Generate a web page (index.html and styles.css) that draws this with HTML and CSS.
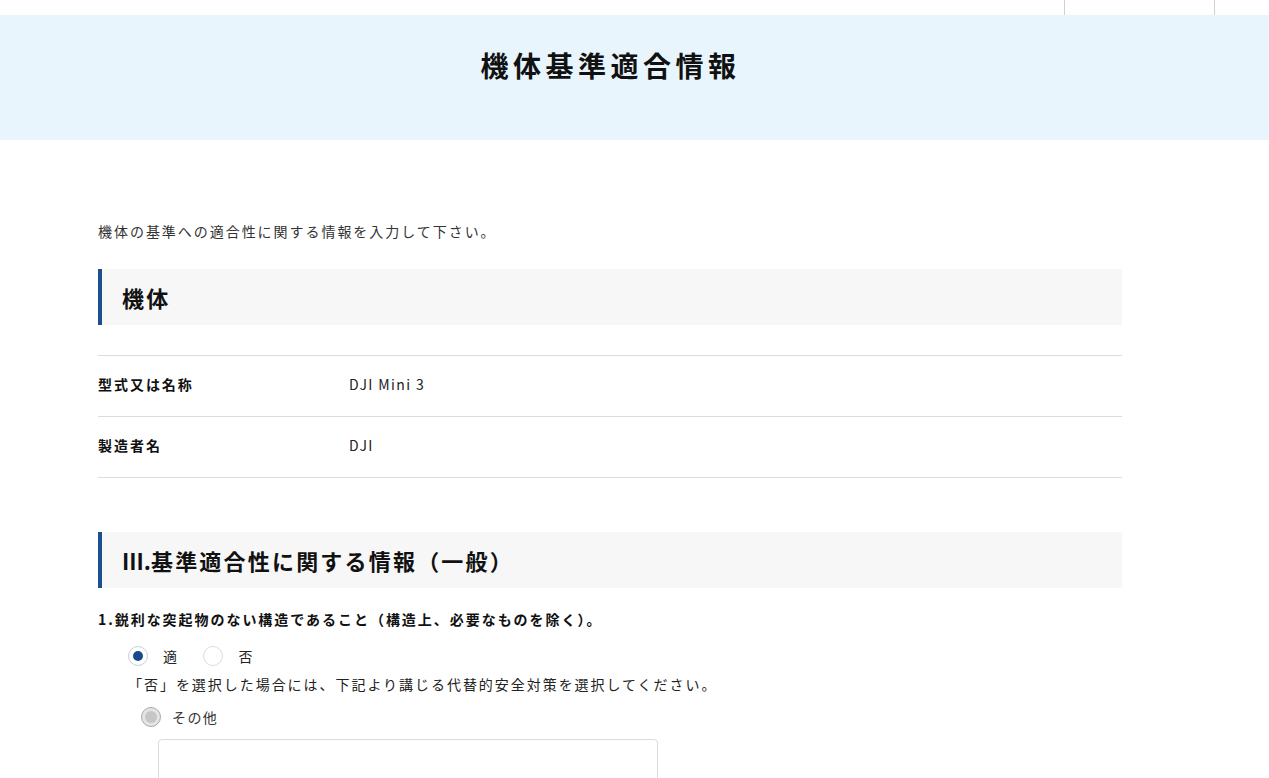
FILE: index.html
```html
<!DOCTYPE html>
<html lang="ja">
<head>
  <meta charset="UTF-8">
  <title>機体基準適合情報</title>
  <link rel="stylesheet" href="styles.css">
</head>
<body>
  <div class="topbar">
    <div class="topbar-cell wide"></div>
    <div class="topbar-cell"></div>
  </div>

  <div class="hero">
    <h1>機体基準適合情報</h1>
  </div>

  <div class="main">
    <p class="intro">機体の基準への適合性に関する情報を入力して下さい。</p>

    <h2 class="section-title">機体</h2>
    <table class="info-table">
      <tr>
        <th>型式又は名称</th>
        <td>DJI Mini 3</td>
      </tr>
      <tr>
        <th>製造者名</th>
        <td>DJI</td>
      </tr>
    </table>

    <h2 class="section-title second"><span class="num">III.</span>基準適合性に関する情報（一般）</h2>

    <div class="question">
      <p class="question-text">1.鋭利な突起物のない構造であること（構造上、必要なものを除く）。</p>
      <div class="answer">
        <div class="radio-row">
          <label class="radio"><input type="radio" name="q1" checked><span>適</span></label>
          <label class="radio"><input type="radio" name="q1"><span>否</span></label>
        </div>
        <p class="note">「否」を選択した場合には、下記より講じる代替的安全対策を選択してください。</p>
        <div class="alt">
          <label class="radio"><input type="radio" name="q1alt" checked disabled><span>その他</span></label>
          <textarea class="alt-text"></textarea>
        </div>
      </div>
    </div>
  </div>
</body>
</html>
```

FILE: styles.css
```css
body {
  margin: 0;
  font-family: "Noto Sans CJK JP", "Noto Sans", sans-serif;
  color: #222;
  background: #fff;
  overflow: hidden;
}

/* top strip with the header nav edges */
.topbar {
  height: 15px;
  display: flex;
  justify-content: flex-end;
}
.topbar-cell {
  width: 54px;
  border-left: 1px solid #d0d0d0;
}
.topbar-cell.wide {
  width: 149px;
}

.hero {
  background: #e8f5fd;
  height: 125px;
  box-sizing: border-box;
  padding-top: 30px;
  padding-right: 48px;
}
.hero h1 {
  margin: 0;
  text-align: center;
  font-size: 28px;
  line-height: 40px;
  font-weight: bold;
  letter-spacing: 0.16em;
  color: #111;
}

.main {
  width: 1024px;
  margin-left: 98px;
  padding-top: 81px;
}

.intro {
  margin: 0;
  font-size: 14px;
  line-height: 20px;
  letter-spacing: 0.14em;
  color: #333;
}

.section-title {
  margin: 28px 0 0;
  height: 56px;
  box-sizing: border-box;
  padding-left: 20px;
  border-left: 4px solid #1d4f8f;
  background: #f7f7f7;
  font-size: 22px;
  line-height: 56px;
  font-weight: bold;
  letter-spacing: 0.1em;
  color: #111;
}
.section-title.second {
  margin-top: 54px;
}
.section-title .num {
  letter-spacing: 0;
}

.info-table {
  width: 100%;
  margin-top: 30px;
  border-collapse: collapse;
  font-size: 14px;
}
.info-table tr {
  border-top: 1px solid #dcdcdc;
  border-bottom: 1px solid #dcdcdc;
}
.info-table th,
.info-table td {
  height: 61px;
  padding: 0 0 4px;
  box-sizing: border-box;
  text-align: left;
  vertical-align: middle;
  letter-spacing: 0.14em;
}
.info-table th {
  width: 251px;
  font-weight: bold;
  color: #111;
}
.info-table td {
  letter-spacing: 0.1em;
  color: #222;
}

.question-text {
  margin: 21px 0 0;
  font-size: 14px;
  line-height: 20px;
  font-weight: bold;
  letter-spacing: 0.14em;
  color: #111;
}

.answer {
  padding-left: 30px;
  margin-top: 17px;
}

.radio-row {
  display: flex;
  gap: 25px;
  height: 20px;
}

.radio {
  display: flex;
  align-items: center;
  gap: 15px;
  font-size: 14px;
  line-height: 20px;
  letter-spacing: 0.1em;
}
.radio input {
  appearance: none;
  -webkit-appearance: none;
  margin: 0;
  width: 20px;
  height: 20px;
  border-radius: 50%;
  border: 1px solid #dcdcdc;
  background: #fff;
  position: relative;
}
.radio input:checked {
  border-color: #c8d0dc;
}
.radio input:checked::after {
  content: "";
  position: absolute;
  top: 4px; left: 4px;
  width: 10px;
  height: 10px;
  border-radius: 50%;
  background: #1a4a8a;
}
.radio input:disabled {
  background: #e4e4e4;
  border-color: #a8a8a8;
}
.radio input:disabled::after {
  top: 3px; left: 3px;
  width: 12px;
  height: 12px;
  background: #c6c6c6;
}

.note {
  margin: 8px 0 0;
  font-size: 14px;
  line-height: 20px;
  letter-spacing: 0.14em;
  color: #222;
}

.alt {
  padding-left: 13px;
  margin-top: 13px;
}
.alt .radio {
  gap: 11px;
  color: #333;
}

.alt-text {
  display: block;
  margin: 12px 0 0 17px;
  width: 500px;
  height: 80px;
  box-sizing: border-box;
  border: 1px solid #dcdcdc;
  border-radius: 4px;
  resize: none;
}
```
